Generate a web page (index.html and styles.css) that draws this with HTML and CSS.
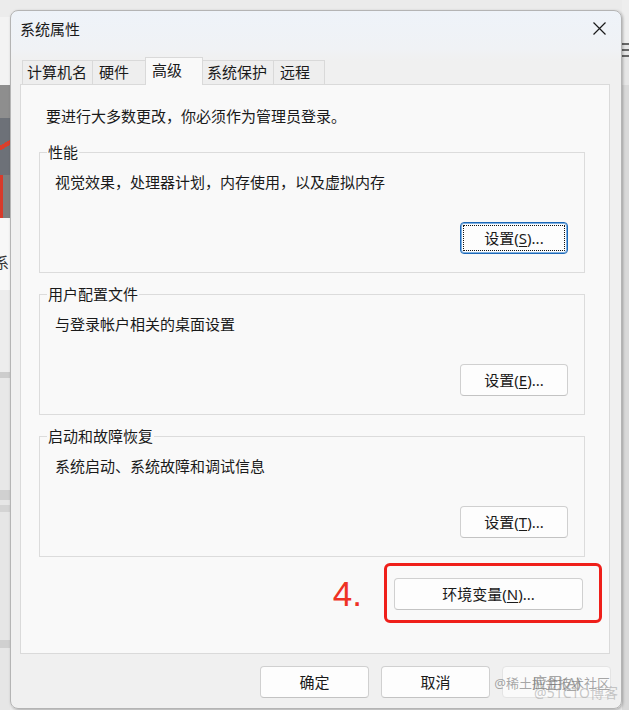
FILE: index.html
```html
<!DOCTYPE html>
<html lang="zh-CN">
<head>
<meta charset="utf-8">
<title>系统属性</title>
<link rel="stylesheet" href="styles.css">
</head>
<body>
<div class="screen">
  <div class="side-left">
    <div class="sl sl-a"></div>
    <div class="sl sl-b"></div>
    <div class="sl sl-c"></div>
    <div class="sl sl-d"></div>
    <div class="sl sl-e"></div>
    <div class="sl sl-f"><span class="sl-char">系</span></div>
    <div class="sl sl-g"></div>
  </div>

  <div class="dialog">
    <div class="titlebar">
      <span class="title">系统属性</span>
      <svg class="close" width="13" height="13" viewBox="0 0 13 13" aria-label="关闭">
        <path d="M0.5 0.5 L12.5 12.5 M12.5 0.5 L0.5 12.5" stroke="#1a1a1a" stroke-width="1.2" fill="none"/>
      </svg>
    </div>

    <div class="body">
      <div class="tabs">
        <div class="tab tab-1">计算机名</div>
        <div class="tab tab-2">硬件</div>
        <div class="tab tab-3 active">高级</div>
        <div class="tab tab-4">系统保护</div>
        <div class="tab tab-5">远程</div>
      </div>

      <div class="panel">
        <p class="intro">要进行大多数更改，你必须作为管理员登录。</p>

        <fieldset class="group">
          <legend>性能</legend>
          <div class="group-body">
            <p class="desc">视觉效果，处理器计划，内存使用，以及虚拟内存</p>
            <div class="actions"><button class="btn btn-set focused">设置(<u>S</u>)...</button></div>
          </div>
        </fieldset>

        <fieldset class="group">
          <legend>用户配置文件</legend>
          <div class="group-body">
            <p class="desc">与登录帐户相关的桌面设置</p>
            <div class="actions"><button class="btn btn-set">设置(<u>E</u>)...</button></div>
          </div>
        </fieldset>

        <fieldset class="group">
          <legend>启动和故障恢复</legend>
          <div class="group-body">
            <p class="desc">系统启动、系统故障和调试信息</p>
            <div class="actions"><button class="btn btn-set">设置(<u>T</u>)...</button></div>
          </div>
        </fieldset>

        <div class="env-row">
          <span class="step">4.</span>
          <div class="mark-wrap">
            <button class="btn btn-env">环境变量(<u>N</u>)...</button>
            <span class="mark"></span>
          </div>
        </div>
      </div>

      <div class="footer">
        <button class="btn btn-foot">确定</button>
        <button class="btn btn-foot">取消</button>
        <button class="btn btn-foot btn-disabled">应用(<u>A</u>)</button>
      </div>
    </div>

    <div class="wm wm-1">@稀土掘金技术社区</div>
    <div class="wm wm-2">@51CTO博客</div>
  </div>

  <div class="side-right">
    <div class="sr sr-a"></div>
    <div class="sr sr-menu"></div>
    <div class="sr sr-b"></div>
    <div class="sr sr-c"></div>
  </div>
</div>
</body>
</html>
```

FILE: styles.css
```css
html, body {
  margin: 0;
  padding: 0;
}

body {
  width: 629px;
  height: 710px;
  overflow: hidden;
  background: #ebebeb;
  font-family: "Noto Sans", "Noto Sans CJK SC", sans-serif;
  font-size: 15px;
  color: #1a1a1a;
}

.screen {
  display: flex;
  height: 710px;
}

/* ---- background strips ---- */
.side-left {
  width: 10px;
  flex: none;
  display: flex;
  flex-direction: column;
  overflow: hidden;
}

.sl-a { height: 17px; background: #ececec; }
.sl-b { height: 68px; background: #f3f3f3; }
.sl-c { height: 33px; background: #8e8e8e; }
.sl-d {
  height: 57px;
  background: linear-gradient(150deg, #6d7178 0 44%, #d8402e 44% 52%, #6d7178 52%);
}
.sl-e {
  height: 43px;
  background: linear-gradient(to right, #d83a2a 0 3px, #7f7f7f 3px);
}
.sl-f {
  height: 72px;
  background: #f7f7f7;
  line-height: 20px;
  padding-top: 34px;
  box-sizing: border-box;
  white-space: nowrap;
}
.sl-char {
  display: block;
  margin-left: -6px;
  color: #333;
}
.sl-g {
  flex: 1;
  background: linear-gradient(to bottom,
    #ededed 0 82px, #cdcdcd 82px 88px, #e8e8e8 88px 200px,
    #d0d0d0 200px 210px, #e6e6e6 210px 215px, #d4d4d4 215px 222px,
    #e6e6e6 222px 350px, #d0d0d0 350px 358px, #e6e6e6 358px);
}

.side-right {
  flex: 1;
  display: flex;
  flex-direction: column;
}
.sr-a { height: 43px; background: #eeeeee; }
.sr-menu {
  height: 14px;
  background: repeating-linear-gradient(to bottom, #666 0 2px, #e6e6e6 2px 6px);
}
.sr-b { height: 28px; background: #e6e6e6; }
.sr-c { flex: 1; background: #d9d9d9; }

/* ---- dialog ---- */
.dialog {
  position: relative;
  flex: none;
  width: 612px;
  height: 699px;
  margin-top: 10px;
  box-sizing: border-box;
  border: 1px solid #b4b4b4;
  border-radius: 8px;
  background: linear-gradient(to bottom, #eef3f9 0, #f0f2f5 38px, #f0f0f0 50px);
  box-shadow: 1px 1px 3px rgba(0, 0, 0, 0.28);
  display: flex;
  flex-direction: column;
}

.titlebar {
  height: 35px;
  display: flex;
  align-items: center;
  justify-content: space-between;
  padding: 0 15px 0 9px;
}

.title {
  line-height: 20px;
}

.close {
  display: block;
}

.body {
  padding: 11px 11px 0 9px;
}

/* ---- tabs ---- */
.tabs {
  display: flex;
  align-items: flex-end;
  height: 27px;
  padding-left: 2px;
}

.tab {
  box-sizing: border-box;
  height: 24px;
  border: 1px solid #d9d9d9;
  border-bottom: none;
  background: #eeeeee;
  margin-left: -1px;
  padding-left: 6px;
  line-height: 22px;
  white-space: nowrap;
}

.tab:first-child { margin-left: 0; }

.tab-1 { width: 71px; padding-left: 4px; }
.tab-2 { width: 54px; }
.tab-3 { width: 58px; }
.tab-4 { width: 72px; padding-left: 4px; }
.tab-5 { width: 52px; }

.tab.active {
  height: 28px;
  margin-bottom: -1px;
  background: #f9f9f9;
  position: relative;
  z-index: 1;
  line-height: 24px;
}

/* ---- panel ---- */
.panel {
  box-sizing: border-box;
  height: 570px;
  border: 1px solid #dadada;
  background: #f9f9f9;
  padding: 21px 24px 0 18px;
}

.intro {
  margin: 0 0 0 7px;
  line-height: 20px;
}

.group {
  margin: 11px 0 0;
  padding: 10px 0 18px;
  border: 1px solid #dcdcdc;
  min-width: 0;
}

.intro + .group {
  margin-top: 16px;
}

.group legend {
  margin-left: 7px;
  padding: 0 1px;
  line-height: 20px;
}

.group-body {
  padding: 0 16px 0 15px;
}

.desc {
  margin: 0;
  line-height: 20px;
}

.actions {
  display: flex;
  justify-content: flex-end;
  margin-top: 30px;
}

/* ---- buttons ---- */
.btn {
  box-sizing: border-box;
  height: 32px;
  padding: 0;
  border: 1px solid #d0d0d0;
  border-bottom-color: #c3c3c3;
  border-radius: 4px;
  background: #fdfdfd;
  font: inherit;
  color: #1a1a1a;
  line-height: 20px;
  text-align: center;
}

.btn u {
  text-underline-offset: 2px;
}

.btn-set { width: 108px; }

.btn.focused {
  border-color: #1d69b8;
  box-shadow: inset 0 0 0 1px #7fb0e0;
  outline: 1px dotted #111;
  outline-offset: -4px;
}

.env-row {
  display: flex;
  justify-content: flex-end;
  align-items: center;
  gap: 32px;
  margin: 19px 2px 0 0;
}

.step {
  font-family: "Liberation Sans", Arial, sans-serif;
  font-size: 35px;
  line-height: 35px;
  color: #ee3124;
}

.mark-wrap {
  position: relative;
  display: flex;
}

.mark {
  position: absolute;
  left: -10px;
  top: -15px;
  right: -19px;
  bottom: -13px;
  border: 3px solid #ef1f1a;
  border-radius: 6px;
  pointer-events: none;
}

.btn-env { width: 189px; }

.footer {
  display: flex;
  justify-content: flex-end;
  gap: 12px;
  margin: 12px -1px 0 0;
}

.btn-foot { width: 109px; }

.btn-disabled {
  color: #a6a6a6;
  border-color: #e4e4e4;
  background: #fafafa;
}

/* ---- watermark ---- */
.wm {
  position: absolute;
  line-height: 16px;
  white-space: nowrap;
}

.wm-1 {
  right: 11px;
  bottom: 17px;
  font-size: 13px;
  color: rgba(110, 110, 110, 0.6);
}

.wm-2 {
  right: 3px;
  bottom: 7px;
  font-size: 14px;
  color: rgba(165, 165, 165, 0.6);
}
```
